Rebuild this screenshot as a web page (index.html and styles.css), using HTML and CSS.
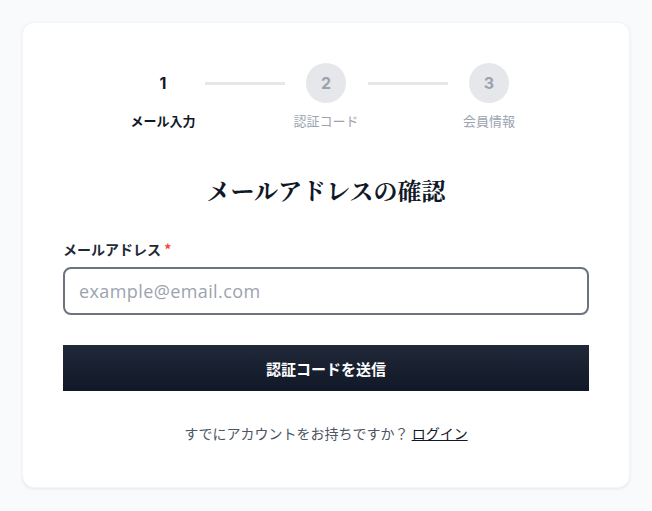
FILE: index.html
```html
<!DOCTYPE html>
<html lang="ja">
<head>
<meta charset="utf-8">
<link rel="stylesheet" href="styles.css">
</head>
<body>
<div class="page">
  <div class="card">
    <div class="stepper">
      <div class="step active">
        <div class="circle">1</div>
        <div class="step-label">メール入力</div>
      </div>
      <div class="line"></div>
      <div class="step">
        <div class="circle">2</div>
        <div class="step-label">認証コード</div>
      </div>
      <div class="line"></div>
      <div class="step">
        <div class="circle">3</div>
        <div class="step-label">会員情報</div>
      </div>
    </div>
    <h1 class="title">メールアドレスの確認</h1>
    <label class="field-label">メールアドレス <span class="req">*</span></label>
    <input class="input" type="email" placeholder="example@email.com">
    <button class="submit">認証コードを送信</button>
    <p class="footer">すでにアカウントをお持ちですか？ <a href="#" class="login">ログイン</a></p>
  </div>
</div>
</body>
</html>
```

FILE: styles.css
```css
* { box-sizing: border-box; }
html, body { margin: 0; padding: 0; }
body {
  background: #f9fafb;
  font-family: "Noto Sans CJK JP", "Noto Sans", sans-serif;
  color: #111827;
}
.page { padding: 22px; }
.card {
  background: #fff;
  border: 1px solid #f3f4f6;
  border-radius: 12px;
  box-shadow: 0 1px 3px rgba(0,0,0,0.08);
  padding: 40px 40px 44px;
}
.stepper {
  display: flex;
  justify-content: center;
  align-items: flex-start;
}
.step {
  width: 63px;
  display: flex;
  flex-direction: column;
  align-items: center;
}
.circle {
  width: 40px;
  height: 40px;
  border-radius: 50%;
  background: #e5e7eb;
  color: #9ca3af;
  font-family: "Inter", "Noto Sans", sans-serif;
  font-weight: 700;
  font-size: 16px;
  display: flex;
  align-items: center;
  justify-content: center;
}
.step.active .circle { background: #fff; color: #111827; }
.step-label {
  margin-top: 8px;
  font-size: 13px;
  line-height: 20px;
  color: #9ca3af;
  white-space: nowrap;
}
.step.active .step-label { color: #111827; font-weight: 700; }
.line {
  width: 80px;
  height: 3px;
  background: #e5e7eb;
  margin: 19px 10px 0;
}
.title {
  margin: 43px 0 0;
  text-align: center;
  font-family: "Noto Serif CJK JP", "Liberation Serif", serif;
  font-size: 24px;
  line-height: 32px;
  font-weight: 700;
  color: #111827;
}
.field-label {
  display: block;
  margin-top: 33px;
  font-size: 14px;
  line-height: 20px;
  font-weight: 700;
  color: #1f2937;
}
.req { color: #ef4444; }
.input {
  display: block;
  width: 100%;
  height: 48px;
  margin-top: 8px;
  border: 2px solid #6b7280;
  border-radius: 8px;
  padding: 0 14px;
  font-family: "Open Sans", "Noto Sans", sans-serif;
  font-size: 18px;
  letter-spacing: 0.4px;
  color: #111827;
  outline: none;
}
.input::placeholder { color: #9ca3af; }
.submit {
  display: block;
  width: 100%;
  height: 46px;
  margin-top: 30px;
  border: 0;
  border-radius: 0;
  background: linear-gradient(to bottom, #202939, #111827);
  color: #fff;
  font-family: "Noto Sans CJK JP", sans-serif;
  font-size: 15px;
  font-weight: 700;
}
.footer {
  margin: 32px 0 0;
  text-align: center;
  font-size: 14px;
  line-height: 20px;
  color: #4b5563;
}
.login { color: #111827; text-decoration: underline; }
```
